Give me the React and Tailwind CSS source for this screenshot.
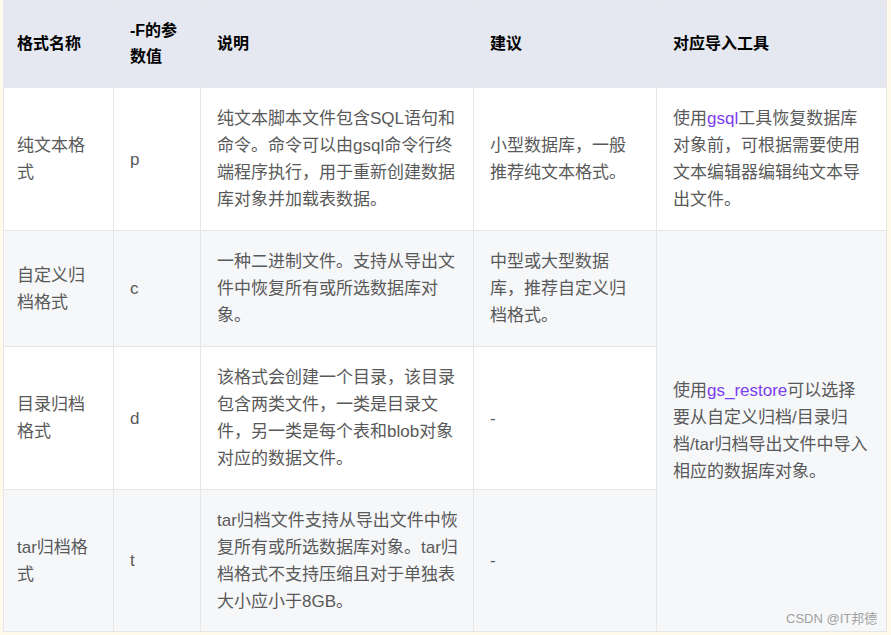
export default function App() {
  const f = { fontFamily: '"Liberation Sans", "Noto Sans CJK SC", sans-serif' };
  const td = "border border-[#e6e6e6] py-[12px] align-middle text-[17px] leading-[27px] text-[#595959]";
  const th = "border border-[#e6e6e6] align-middle text-left text-[16px] leading-[26px] font-bold text-black";
  const P = "text-[#7a3cf0]";
  const c1 = " pl-[13px] pr-[14px]";
  const c = " pl-[16px] pr-[14px]";
  return (
    <div className="relative w-[891px] h-[635px] bg-[#fffaeb] pl-[3px] overflow-hidden" style={f}>
      <table className="border-collapse table-fixed w-[883px]">
        <colgroup>
          <col className="w-[110px]" /><col className="w-[87px]" /><col className="w-[273px]" /><col className="w-[183px]" /><col className="w-[230px]" />
        </colgroup>
        <thead>
          <tr className="h-[87px] bg-[#e5e8f0]">
            <th className={th + c1}>格式名称</th>
            <th className={th + c}>-F的参数值</th>
            <th className={th + c}>说明</th>
            <th className={th + c}>建议</th>
            <th className={th + c}>对应导入工具</th>
          </tr>
        </thead>
        <tbody>
          <tr className="h-[143px] bg-white">
            <td className={td + c1}>纯文本格式</td>
            <td className={td + c}>p</td>
            <td className={td + c}>纯文本脚本文件包含SQL语句和命令。命令可以由gsql命令行终端程序执行，用于重新创建数据库对象并加载表数据。</td>
            <td className={td + c}>小型数据库，一般推荐纯文本格式。</td>
            <td className={td + c}>使用<span className={P}>gsql</span>工具恢复数据库对象前，可根据需要使用文本编辑器编辑纯文本导出文件。</td>
          </tr>
          <tr className="h-[116px] bg-[#f6f7f9]">
            <td className={td + c1}>自定义归档格式</td>
            <td className={td + c}>c</td>
            <td className={td + c}>一种二进制文件。支持从导出文件中恢复所有或所选数据库对象。</td>
            <td className={td + c}>中型或大型数据库，推荐自定义归档格式。</td>
            <td rowSpan={3} className={td + c}>使用<span className={P}>gs_restore</span>可以选择要从自定义归档/目录归档/tar归档导出文件中导入相应的数据库对象。</td>
          </tr>
          <tr className="h-[143px] bg-white">
            <td className={td + c1}>目录归档格式</td>
            <td className={td + c}>d</td>
            <td className={td + c}>该格式会创建一个目录，该目录包含两类文件，一类是目录文件，另一类是每个表和blob对象对应的数据文件。</td>
            <td className={td + c}>-</td>
          </tr>
          <tr className="h-[142px] bg-[#f6f7f9]">
            <td className={td + c1}>tar归档格式</td>
            <td className={td + c}>t</td>
            <td className={td + c}>tar归档文件支持从导出文件中恢复所有或所选数据库对象。tar归档格式不支持压缩且对于单独表大小应小于8GB。</td>
            <td className={td + c}>-</td>
          </tr>
        </tbody>
      </table>
      <div className="absolute left-[786px] top-[609px] text-[13px] text-[#a0a0a0]">CSDN @IT邦德</div>
    </div>
  );
}
